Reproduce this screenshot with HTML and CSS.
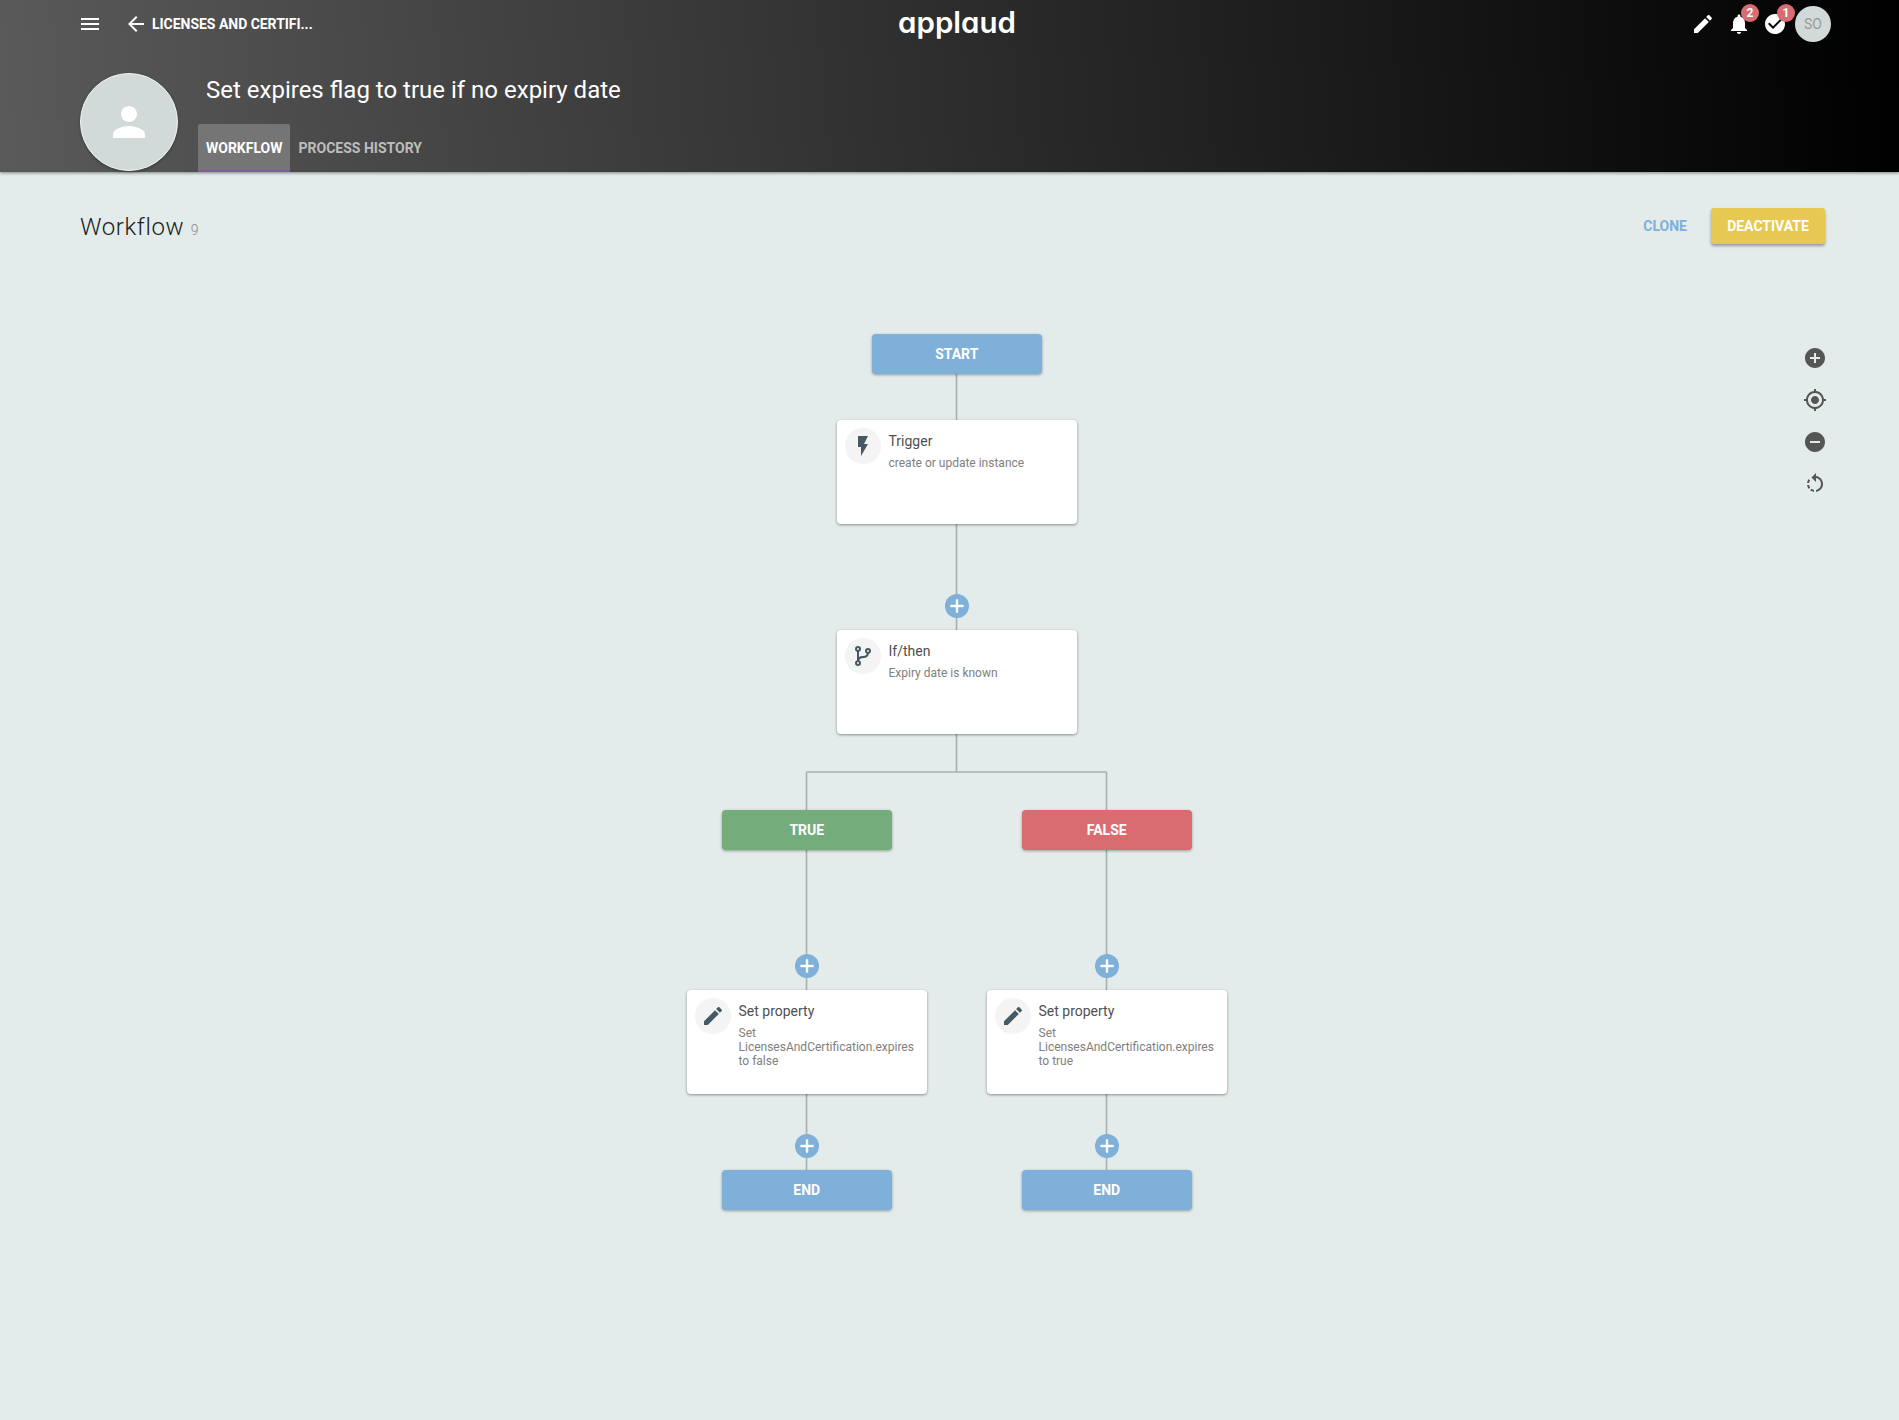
FILE: index.html
```html
<!DOCTYPE html>
<html lang="en">
<head>
<meta charset="utf-8">
<title>Workflow</title>
<link rel="stylesheet" href="styles.css">
</head>
<body>
<div class="page">
  <header class="header">
    <div class="topbar">
      <div class="nav">
        <svg class="icon" viewBox="0 0 24 24"><path d="M3 18h18v-2H3v2zm0-5h18v-2H3v2zm0-7v2h18V6H3z"/></svg>
        <svg class="icon back" viewBox="0 0 24 24"><path d="M20 11H7.83l5.59-5.59L12 4l-8 8 8 8 1.41-1.41L7.83 13H20v-2z"/></svg>
        <span class="crumb">LICENSES AND CERTIFI...</span>
      </div>
      <div class="logo">applaud</div>
      <div class="actions">
        <span class="action"><svg class="icon" viewBox="0 0 24 24"><path d="M3 17.25V21h3.75L17.81 9.94l-3.75-3.75L3 17.25zM20.71 7.04c.39-.39.39-1.02 0-1.41l-2.34-2.34c-.39-.39-1.02-.39-1.41 0l-1.83 1.83 3.75 3.75 1.83-1.83z"/></svg></span>
        <span class="action"><svg class="icon" viewBox="0 0 24 24"><path d="M12 22c1.1 0 2-.9 2-2h-4c0 1.1.89 2 2 2zm6-6v-5c0-3.07-1.64-5.64-4.5-6.32V4c0-.83-.67-1.5-1.5-1.5s-1.5.67-1.5 1.5v.68C7.63 5.36 6 7.92 6 11v5l-2 2v1h16v-1l-2-2z"/></svg><span class="badge">2</span></span>
        <span class="action"><svg class="icon" viewBox="0 0 24 24"><path d="M12 2C6.48 2 2 6.48 2 12s4.48 10 10 10 10-4.48 10-10S17.52 2 12 2zm-2 15l-5-5 1.41-1.41L10 14.17l7.59-7.59L19 8l-9 9z"/></svg><span class="badge">1</span></span>
        <span class="user">SO</span>
      </div>
    </div>
    <div class="profile">
      <div class="avatar"><svg class="avatar-icon" viewBox="0 0 24 24"><path d="M12 12c2.21 0 4-1.79 4-4s-1.79-4-4-4-4 1.79-4 4 1.79 4 4 4zm0 2c-2.67 0-8 1.34-8 4v2h16v-2c0-2.66-5.33-4-8-4z"/></svg></div>
      <div class="profile-main">
        <h1 class="title">Set expires flag to true if no expiry date</h1>
        <nav class="tabs">
          <span class="tab active">WORKFLOW</span>
          <span class="tab">PROCESS HISTORY</span>
        </nav>
      </div>
    </div>
  </header>

  <main class="main">
    <div class="toolbar">
      <h2 class="heading">Workflow <small class="count">9</small></h2>
      <div class="buttons">
        <span class="clone">CLONE</span>
        <span class="deactivate">DEACTIVATE</span>
      </div>
    </div>

    <section class="canvas">
      <svg class="wires" width="1899" height="1140" viewBox="0 0 1899 1140">
        <path d="M956.5 94V140M956.5 244V350M956.5 454V492M806.5 492H1106.5M806.5 492V530M1106.5 492V530M806.5 570V710M1106.5 570V710M806.5 814V890M1106.5 814V890"/>
      </svg>

      <div class="node terminal blue n-start">START</div>

      <article class="node card n-trigger">
        <span class="badge-icon"><svg viewBox="0 0 24 24"><path d="M7 2v11h3v9l7-12h-4l4-8z"/></svg></span>
        <div class="card-text">
          <div class="card-title">Trigger</div>
          <div class="card-sub">create or update instance</div>
        </div>
      </article>

      <span class="node plus p-main"><svg viewBox="0 0 24 24"><path d="M19 13h-6v6h-2v-6H5v-2h6V5h2v6h6v2z"/></svg></span>

      <article class="node card n-if">
        <span class="badge-icon"><svg viewBox="0 0 24 24"><path d="M13,14C9.64,14 8.54,15.35 8.18,16.24C9.25,16.7 10,17.76 10,19A3,3 0 0,1 7,22A3,3 0 0,1 4,19C4,17.69 4.83,16.58 6,16.17V7.83C4.83,7.42 4,6.31 4,5A3,3 0 0,1 7,2A3,3 0 0,1 10,5C10,6.31 9.17,7.42 8,7.83V13.12C8.88,12.47 10.16,12 12,12C14.67,12 15.56,10.66 15.85,9.77C14.77,9.32 14,8.25 14,7A3,3 0 0,1 17,4A3,3 0 0,1 20,7C20,8.34 19.12,9.5 17.91,9.86C17.65,11.29 16.68,14 13,14M7,18A1,1 0 0,0 6,19A1,1 0 0,0 7,20A1,1 0 0,0 8,19A1,1 0 0,0 7,18M7,4A1,1 0 0,0 6,5A1,1 0 0,0 7,6A1,1 0 0,0 8,5A1,1 0 0,0 7,4M17,6A1,1 0 0,0 16,7A1,1 0 0,0 17,8A1,1 0 0,0 18,7A1,1 0 0,0 17,6Z"/></svg></span>
        <div class="card-text">
          <div class="card-title">If/then</div>
          <div class="card-sub">Expiry date is known</div>
        </div>
      </article>

      <div class="node terminal green n-true">TRUE</div>
      <div class="node terminal red n-false">FALSE</div>

      <span class="node plus p-left-1"><svg viewBox="0 0 24 24"><path d="M19 13h-6v6h-2v-6H5v-2h6V5h2v6h6v2z"/></svg></span>
      <span class="node plus p-right-1"><svg viewBox="0 0 24 24"><path d="M19 13h-6v6h-2v-6H5v-2h6V5h2v6h6v2z"/></svg></span>

      <article class="node card n-set-left">
        <span class="badge-icon"><svg viewBox="0 0 24 24"><path d="M3 17.25V21h3.75L17.81 9.94l-3.75-3.75L3 17.25zM20.71 7.04c.39-.39.39-1.02 0-1.41l-2.34-2.34c-.39-.39-1.02-.39-1.41 0l-1.83 1.83 3.75 3.75 1.83-1.83z"/></svg></span>
        <div class="card-text">
          <div class="card-title">Set property</div>
          <div class="card-sub">Set LicensesAndCertification.expires to false</div>
        </div>
      </article>

      <article class="node card n-set-right">
        <span class="badge-icon"><svg viewBox="0 0 24 24"><path d="M3 17.25V21h3.75L17.81 9.94l-3.75-3.75L3 17.25zM20.71 7.04c.39-.39.39-1.02 0-1.41l-2.34-2.34c-.39-.39-1.02-.39-1.41 0l-1.83 1.83 3.75 3.75 1.83-1.83z"/></svg></span>
        <div class="card-text">
          <div class="card-title">Set property</div>
          <div class="card-sub">Set LicensesAndCertification.expires to true</div>
        </div>
      </article>

      <span class="node plus p-left-2"><svg viewBox="0 0 24 24"><path d="M19 13h-6v6h-2v-6H5v-2h6V5h2v6h6v2z"/></svg></span>
      <span class="node plus p-right-2"><svg viewBox="0 0 24 24"><path d="M19 13h-6v6h-2v-6H5v-2h6V5h2v6h6v2z"/></svg></span>

      <div class="node terminal blue n-end-left">END</div>
      <div class="node terminal blue n-end-right">END</div>

      <div class="zoom-tools">
        <svg viewBox="0 0 24 24"><path d="M12 2C6.48 2 2 6.48 2 12s4.48 10 10 10 10-4.48 10-10S17.52 2 12 2zm5 11h-4v4h-2v-4H7v-2h4V7h2v4h4v2z"/></svg>
        <svg viewBox="0 0 24 24"><path d="M12 8c-2.21 0-4 1.79-4 4s1.79 4 4 4 4-1.79 4-4-1.79-4-4-4zm8.94 3c-.46-4.17-3.77-7.48-7.94-7.94V1h-2v2.06C6.83 3.52 3.52 6.83 3.06 11H1v2h2.06c.46 4.17 3.77 7.48 7.94 7.94V23h2v-2.06c4.17-.46 7.48-3.77 7.94-7.94H23v-2h-2.06zM12 19c-3.87 0-7-3.13-7-7s3.13-7 7-7 7 3.13 7 7-3.13 7-7 7z"/></svg>
        <svg viewBox="0 0 24 24"><path d="M12 2C6.48 2 2 6.48 2 12s4.48 10 10 10 10-4.48 10-10S17.52 2 12 2zm5 11H7v-2h10v2z"/></svg>
        <svg viewBox="0 0 24 24"><path d="M7.11 8.53L5.7 7.11C4.8 8.27 4.24 9.61 4.07 11h2.02c.14-.87.49-1.72 1.02-2.47zM6.09 13H4.07c.17 1.39.72 2.73 1.62 3.89l1.41-1.42c-.52-.75-.87-1.59-1.01-2.47zm1.01 5.32c1.16.9 2.51 1.44 3.9 1.61V17.9c-.87-.15-1.71-.49-2.46-1.03L7.1 18.32zM13 4.07V1L8.45 5.55 13 10V6.09c2.84.48 5 2.94 5 5.91s-2.16 5.43-5 5.91v2.02c3.95-.49 7-3.85 7-7.93s-3.05-7.44-7-7.93z"/></svg>
      </div>
    </section>
  </main>
</div>
</body>
</html>
```

FILE: styles.css
```css
* { box-sizing: border-box; }

html, body {
  margin: 0;
  height: 100%;
}

body {
  font-family: Roboto, "Liberation Sans", sans-serif;
  background: #e3ecea;
  color: #333;
  overflow: hidden;
}

.page {
  display: flex;
  flex-direction: column;
  height: 1420px;
}

/* Header */
.header {
  height: 172px;
  flex: none;
  background: linear-gradient(85deg, #5a5a5a 0%, #000 100%);
  box-shadow: 0 1px 3px rgba(0, 0, 0, .45);
  position: relative;
  z-index: 2;
  color: #fff;
}

.topbar {
  height: 48px;
  display: grid;
  grid-template-columns: 1fr auto 1fr;
  align-items: center;
  padding: 0 68px 0 78px;
}

.icon {
  width: 24px;
  height: 24px;
  fill: #fff;
  display: block;
}

.nav {
  display: flex;
  align-items: center;
}

.back { margin-left: 22px; }

.crumb {
  margin-left: 4px;
  font-size: 14px;
  font-weight: 700;
  letter-spacing: -.03px;
  white-space: nowrap;
}

.logo {
  margin-left: 5px;
  font-family: Inter, sans-serif;
  font-feature-settings: "cv11";
  font-size: 29.5px;
  font-weight: 600;
  line-height: 32px;
  margin-top: -4px;
}

.actions {
  display: flex;
  justify-content: flex-end;
  align-items: center;
  gap: 12px;
}

.action { position: relative; display: block; }

.badge {
  position: absolute;
  left: 14px;
  top: -8px;
  width: 18px;
  height: 18px;
  border-radius: 50%;
  background: #d96c70;
  color: #fff;
  font-size: 12px;
  font-weight: 700;
  line-height: 18px;
  text-align: center;
}

.user {
  width: 36px;
  height: 36px;
  margin-left: -4px;
  border-radius: 50%;
  background: #d2d9d9;
  color: #999;
  font-size: 14px;
  line-height: 36px;
  text-align: center;
}

.profile {
  display: flex;
  padding-left: 80px;
}

.avatar {
  width: 98px;
  height: 98px;
  margin-top: 25px;
  border-radius: 50%;
  border: 1px solid #f4f6f6;
  background: #d2d9d9;
  display: flex;
  align-items: center;
  justify-content: center;
  box-shadow: 0 1px 3px rgba(0, 0, 0, .3);
}

.avatar-icon {
  width: 48px;
  height: 48px;
  fill: #fff;
}

.profile-main { margin-left: 20px; }

.title {
  margin: 26px 0 18px;
  padding-left: 8px;
  font-size: 24px;
  font-weight: 400;
  line-height: 32px;
  white-space: nowrap;
}

.tabs {
  display: flex;
  height: 48px;
}

.tab {
  padding: 0 8px;
  font-size: 14px;
  font-weight: 700;
  line-height: 48px;
  color: #bdbdbd;
}

.tab.active {
  padding-right: 7px;
  margin-right: 1px;
  color: #fff;
  background: #757575;
  border-radius: 2px 2px 0 0;
  box-shadow: inset 0 -2px 0 #7e5f9e;
}

/* Main */
.main {
  flex: 1;
  display: flex;
  flex-direction: column;
  min-height: 0;
}

.toolbar {
  display: flex;
  justify-content: space-between;
  align-items: center;
  height: 36px;
  margin: 36px 74px 36px 80px;
  flex: none;
}

.heading {
  margin: 2px 0 0;
  font-size: 24px;
  font-weight: 300;
  color: #212121;
  letter-spacing: .6px;
}

.count {
  font-size: 14px;
  color: #888;
  letter-spacing: 0;
}

.buttons {
  display: flex;
  align-items: center;
  gap: 24px;
}

.clone {
  font-size: 14px;
  font-weight: 700;
  color: #7fb0da;
}

.deactivate {
  width: 114px;
  height: 36px;
  border-radius: 3px;
  background: #e6c852;
  color: #fff;
  font-size: 14px;
  font-weight: 700;
  line-height: 36px;
  text-align: center;
  box-shadow: 0 2px 3px rgba(0, 0, 0, .35);
}

/* Diagram */
.canvas {
  position: relative;
  flex: 1;
}

.wires {
  position: absolute;
  left: 0;
  top: 0;
  fill: none;
  stroke: #a9aeae;
  stroke-width: 1.6;
}

.node { position: absolute; }

.terminal {
  width: 170.5px;
  height: 40px;
  border-radius: 4px;
  color: #fff;
  font-size: 14px;
  font-weight: 700;
  line-height: 40px;
  text-align: center;
  box-shadow: 0 1px 3px rgba(0, 0, 0, .35);
}

.blue { background: #7fb0da; }
.green { background: #74ac7c; }
.red { background: #d96c70; }

.card {
  width: 240px;
  height: 104px;
  padding: 8px 8px 8px 7.5px;
  display: flex;
  gap: 8px;
  border-radius: 4px;
  background: #fff;
  box-shadow: 0 1px 3px rgba(0, 0, 0, .4);
}

.badge-icon {
  width: 36px;
  height: 36px;
  flex: none;
  border-radius: 50%;
  background: #f4f4f4;
  display: flex;
  align-items: center;
  justify-content: center;
}

.badge-icon svg {
  width: 24px;
  height: 24px;
  fill: #455a64;
}

.card-text { min-width: 0; }

.card-title {
  margin-top: 3px;
  font-size: 14px;
  line-height: 20px;
  color: #4f4f4f;
}

.card-sub {
  margin-top: 5px;
  font-size: 12px;
  line-height: 14px;
  color: #808080;
}

.plus {
  width: 24px;
  height: 24px;
  border-radius: 50%;
  background: #7fb0da;
  display: flex;
  align-items: center;
  justify-content: center;
}

.plus svg {
  width: 22px;
  height: 22px;
  fill: #fff;
  stroke: #fff;
  stroke-width: .5;
}

.n-start { left: 871.5px; top: 54px; }
.n-trigger { left: 837px; top: 140px; }
.n-if { left: 837px; top: 350px; }
.n-true { left: 721.5px; top: 530px; }
.n-false { left: 1021.5px; top: 530px; }
.n-set-left { left: 687px; top: 710px; }
.n-set-right { left: 987px; top: 710px; }
.n-end-left { left: 721.5px; top: 890px; }
.n-end-right { left: 1021.5px; top: 890px; }
.p-main { left: 945px; top: 314px; }
.p-left-1 { left: 795px; top: 674px; }
.p-right-1 { left: 1095px; top: 674px; }
.p-left-2 { left: 795px; top: 854px; }
.p-right-2 { left: 1095px; top: 854px; }

.zoom-tools {
  position: absolute;
  left: 1803px;
  top: 66px;
  display: flex;
  flex-direction: column;
  gap: 18px;
}

.zoom-tools svg {
  width: 24px;
  height: 24px;
  display: block;
  fill: #555;
}
```
